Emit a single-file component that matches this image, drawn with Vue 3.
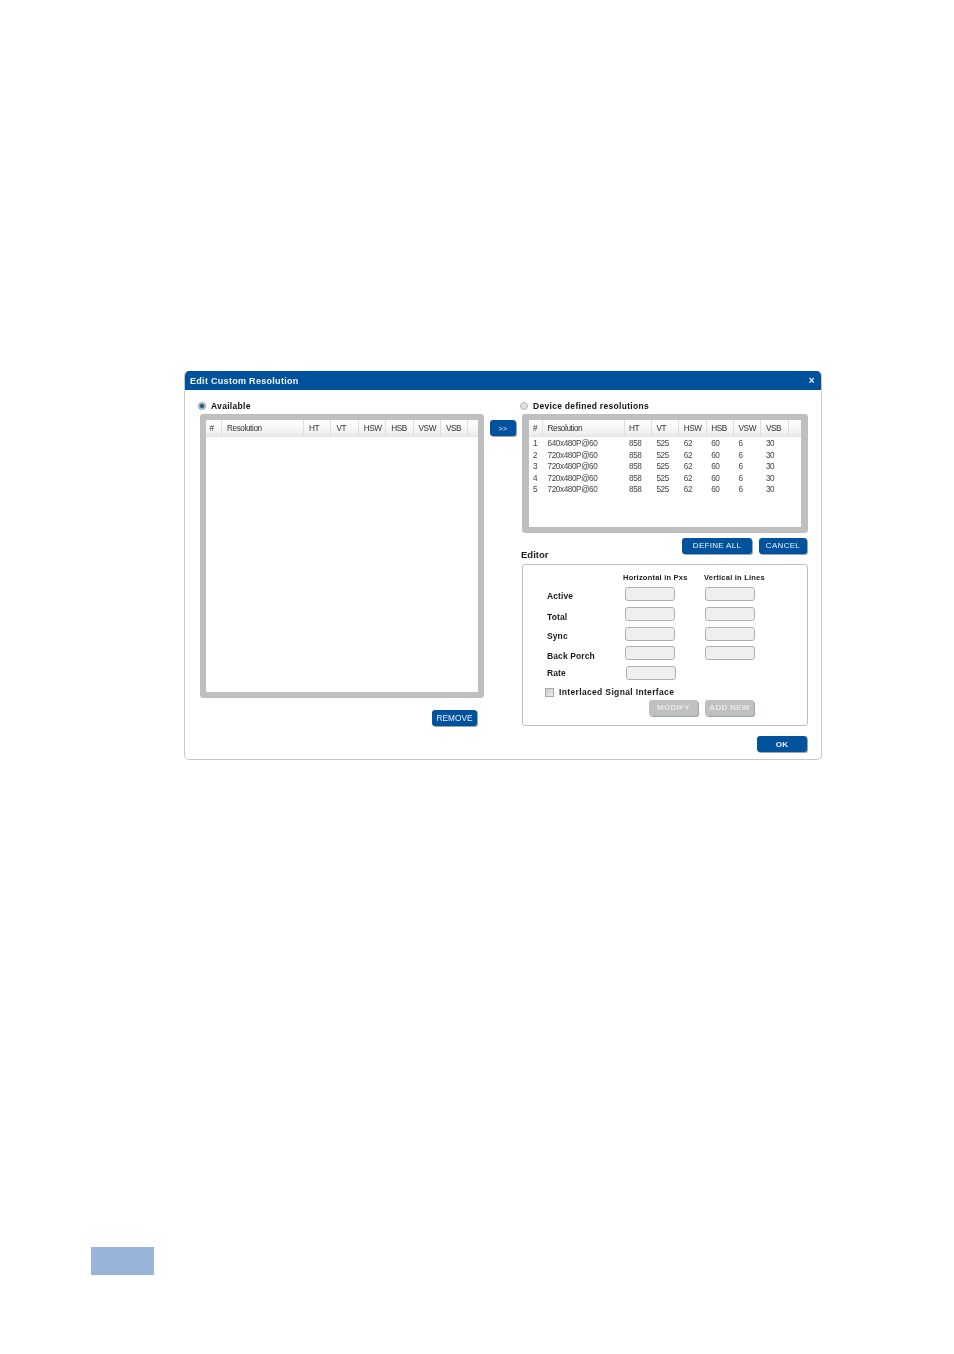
<script setup>
const cols = ['#', 'Resolution', 'HT', 'VT', 'HSW', 'HSB', 'VSW', 'VSB']
const rows = [
  ['1', '640x480P@60'],
  ['2', '720x480P@60'],
  ['3', '720x480P@60'],
  ['4', '720x480P@60'],
  ['5', '720x480P@60'],
].map((r) => [...r, '858', '525', '62', '60', '6', '30'])
const fields = [
  { label: 'Active', cls: 'off2', pair: true },
  { label: 'Total', cls: 'off3', pair: true },
  { label: 'Sync', cls: 'off2', pair: true },
  { label: 'Back Porch', cls: 'off3', pair: true },
  { label: 'Rate', cls: 'off0', pair: false },
]
</script>

<template>
  <div class="page">
    <section class="dialog">
      <header class="titlebar">
        <span>Edit Custom Resolution</span>
        <span class="close">×</span>
      </header>
      <div class="body">
        <div class="left">
          <label class="radio-row">
            <span class="radio on"></span>
            <span>Available</span>
          </label>
          <div class="panel panel-left">
            <div class="table table-left">
              <div class="thead">
                <span v-for="c in cols" :key="c" class="th">{{ c }}</span>
                <span class="th th-end"></span>
              </div>
            </div>
          </div>
          <button class="btn remove">REMOVE</button>
        </div>

        <button class="btn move">&gt;&gt;</button>

        <div class="right">
          <label class="radio-row">
            <span class="radio"></span>
            <span>Device defined resolutions</span>
          </label>
          <div class="panel panel-right">
            <div class="table table-right">
              <div class="thead">
                <span v-for="c in cols" :key="c" class="th">{{ c }}</span>
                <span class="th th-end"></span>
              </div>
              <div class="tbody">
                <div v-for="r in rows" :key="r[0]" class="tr">
                  <span v-for="(v, i) in r" :key="i" class="td">{{ v }}</span>
                </div>
              </div>
            </div>
          </div>
          <div class="actions">
            <button class="btn define">DEFINE ALL</button>
            <button class="btn cancel">CANCEL</button>
          </div>
          <div class="editor-title">Editor</div>
          <div class="editor">
            <div class="grid">
              <span></span>
              <span class="col-title ct1">Horizontal in Pxs</span>
              <span class="col-title ct2">Vertical in Lines</span>
              <template v-for="f in fields" :key="f.label">
                <span class="field-label" :class="f.cls">{{ f.label }}</span>
                <span class="input" :class="{ shifted: !f.pair }"></span>
                <span v-if="f.pair" class="input"></span>
                <span v-else></span>
              </template>
            </div>
            <label class="check-row">
              <span class="check"></span>
              <span>Interlaced Signal Interface</span>
            </label>
            <div class="editor-actions">
              <button class="btn off">MODIFY</button>
              <button class="btn off">ADD NEW</button>
            </div>
          </div>
          <div class="ok-row">
            <button class="btn ok">OK</button>
          </div>
        </div>
      </div>
    </section>
    <div class="tab"></div>
  </div>
</template>

<style scoped>
.page {
  box-sizing: border-box;
  width: 954px;
  height: 1354px;
  padding: 371px 0 0 184px;
  background: #fff;
  font-family: "Liberation Sans", Arial, sans-serif;
  color: #111;
  overflow: hidden;
}
.dialog {
  box-sizing: border-box;
  width: 638px;
  height: 389px;
  border: 1px solid #c9c9c9;
  border-top: 0;
  border-radius: 5px;
  overflow: hidden;
  filter: blur(0.25px);
}
.titlebar {
  height: 19px;
  background: #00529c;
  color: #f2f6fa;
  display: flex;
  justify-content: space-between;
  align-items: center;
  padding: 0 6px 0 5px;
  font-size: 9px;
  font-weight: 700;
  letter-spacing: 0.3px;
}
.close {
  font-size: 10px;
  line-height: 10px;
}
.body {
  display: flex;
  align-items: flex-start;
  padding: 11px 13px 0 15px;
}
.left {
  width: 284px;
  display: flex;
  flex-direction: column;
}
.right {
  width: 286px;
  display: flex;
  flex-direction: column;
}
.radio-row {
  box-sizing: border-box;
  height: 13px;
  padding-bottom: 3px;
  margin-left: -2px;
  display: flex;
  align-items: center;
  gap: 5px;
  font-size: 8.5px;
  font-weight: 700;
  letter-spacing: 0.3px;
}
.radio {
  box-sizing: border-box;
  width: 8px;
  height: 8px;
  border-radius: 50%;
  background: #e2e2e2;
  border: 1px solid #b4b4b4;
}
.radio.on {
  background: radial-gradient(circle, #14618f 0 1.8px, #b9c6cc 2.4px);
  border-color: #8f9aa0;
}
.panel {
  box-sizing: border-box;
  background: #bfbfbf;
  border-radius: 3px;
}
.panel-left {
  height: 284px;
  padding: 6px;
}
.panel-right {
  height: 119px;
  padding: 6px 7px;
}
.table {
  height: 100%;
  background: #fff;
}
.thead,
.tr {
  display: grid;
  font-size: 8.2px;
  letter-spacing: -0.4px;
  color: #333;
}
.table-left .thead {
  grid-template-columns: 16px 82px 27.4px 27.4px 27.4px 27.4px 27.4px 27.4px 9px;
}
.table-right .thead,
.table-right .tr {
  grid-template-columns: 14px 81.5px 27.4px 27.4px 27.4px 27.4px 27.4px 27.4px 10px;
}
.thead {
  height: 17px;
  background: linear-gradient(#fff, #f3f3f3 70%, #e9e9e9);
  border-bottom: 1px solid #e3e3e3;
  box-sizing: border-box;
}
.th {
  box-sizing: border-box;
  height: 16px;
  padding-top: 1px;
  line-height: 16px;
  padding-left: 5px;
  border-right: 1px solid #dedede;
}
.th:first-child {
  padding-left: 3.5px;
}
.table-right .th {
  padding-left: 4.5px;
}
.table-right .th:first-child {
  padding-left: 4px;
}
.th-end {
  border-right: 0;
}
.tbody {
  padding-top: 1px;
}
.tr {
  height: 11.6px;
  line-height: 11.6px;
}
.td {
  padding-left: 4.5px;
  color: #444;
}
.td:first-child {
  padding-left: 4px;
}
.btn {
  box-sizing: border-box;
  height: 16px;
  padding: 0;
  border: 0;
  border-radius: 3px;
  background: #00529c;
  color: #eef3f8;
  font-family: inherit;
  font-size: 8px;
  letter-spacing: 0.3px;
  line-height: 15px;
  box-shadow: 1px 1px 0 #9aa5ae;
}
.move {
  width: 26px;
  margin: 19px 6px 0 6px;
  font-size: 7px;
  flex: none;
}
.remove {
  width: 45px;
  margin: 12px 0 0 232px;
  letter-spacing: 0;
  font-size: 8.3px;
}
.actions {
  display: flex;
  justify-content: flex-end;
  gap: 7px;
  margin-top: 5px;
  padding-right: 1px;
}
.define {
  width: 70px;
  padding-bottom: 1px;
}
.cancel {
  width: 48px;
  padding-bottom: 1px;
}
.editor-title {
  height: 15px;
  line-height: 12px;
  margin-top: -5px;
  margin-left: -1px;
  font-size: 9.5px;
  font-weight: 700;
  color: #222;
}
.editor {
  box-sizing: border-box;
  height: 162px;
  border: 1px solid #bdbdbd;
  border-radius: 3px;
}
.grid {
  display: grid;
  grid-template-columns: 102px 80px 50px;
  grid-template-rows: 22px 20px 20px 19px 20px 15px;
}
.col-title {
  font-size: 7.5px;
  font-weight: 700;
  white-space: nowrap;
  line-height: 10px;
  padding-top: 8px;
  letter-spacing: 0.22px;
  color: #1a1a1a;
}
.ct1 {
  margin-left: -2px;
}
.ct2 {
  margin-left: -1px;
}
.field-label {
  padding-left: 24px;
  font-size: 8.5px;
  font-weight: 700;
  line-height: 10px;
  letter-spacing: 0.1px;
  color: #1a1a1a;
}
.off0 {
  padding-top: 2px;
}
.off2 {
  padding-top: 4px;
}
.off3 {
  padding-top: 5px;
}
.input {
  box-sizing: border-box;
  width: 50px;
  height: 14px;
  background: #efefef;
  border: 1px solid #b0b0b0;
  border-radius: 3px;
}
.shifted {
  margin-left: 1px;
}
.check-row {
  display: flex;
  align-items: center;
  gap: 5px;
  height: 10px;
  margin: 6px 0 0 22px;
  font-size: 8.5px;
  font-weight: 700;
  letter-spacing: 0.35px;
  color: #1a1a1a;
}
.check {
  box-sizing: border-box;
  width: 9px;
  height: 9px;
  border: 1px solid #a8a8a8;
  background: linear-gradient(135deg, #c9c9c9, #ececec);
}
.editor-actions {
  display: flex;
  gap: 7px;
  margin: 3px 0 0 126px;
}
.off {
  width: 49px;
  padding-bottom: 1px;
  background: #c0c0c0;
  color: #e9e9e9;
  font-weight: 700;
  font-size: 8px;
}
.ok-row {
  display: flex;
  justify-content: flex-end;
  margin-top: 10px;
  padding-right: 1px;
}
.ok {
  width: 50px;
  font-weight: 700;
}
.tab {
  width: 63px;
  height: 28px;
  margin: 487px 0 0 -93px;
  background: #99b4d9;
}
</style>
